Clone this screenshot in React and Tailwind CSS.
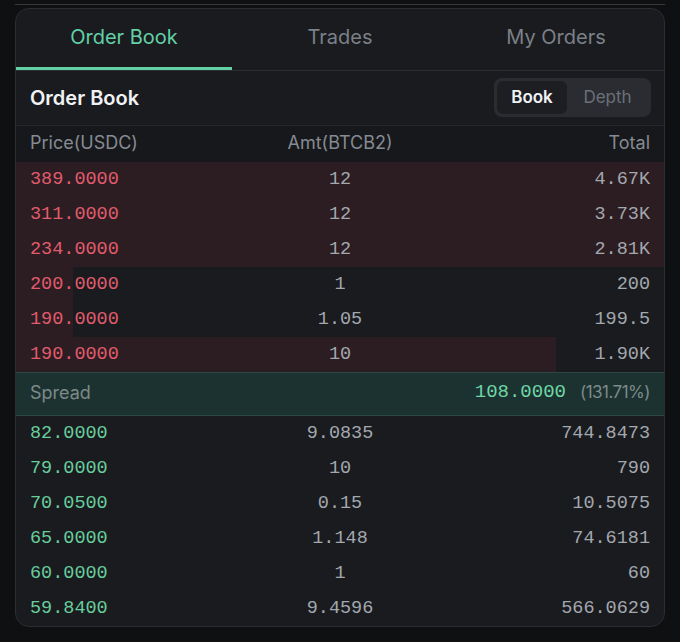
import React from 'react';

const asks = [
  { price: '389.0000', amt: '12', total: '4.67K', depth: 100 },
  { price: '311.0000', amt: '12', total: '3.73K', depth: 100 },
  { price: '234.0000', amt: '12', total: '2.81K', depth: 100 },
  { price: '200.0000', amt: '1', total: '200', depth: 8.8 },
  { price: '190.0000', amt: '1.05', total: '199.5', depth: 8.8 },
  { price: '190.0000', amt: '10', total: '1.90K', depth: 83.4 },
];

const bids = [
  { price: '82.0000', amt: '9.0835', total: '744.8473' },
  { price: '79.0000', amt: '10', total: '790' },
  { price: '70.0500', amt: '0.15', total: '10.5075' },
  { price: '65.0000', amt: '1.148', total: '74.6181' },
  { price: '60.0000', amt: '1', total: '60' },
  { price: '59.8400', amt: '9.4596', total: '566.0629' },
];

const sans = "font-['Inter','Noto_Sans',sans-serif]";
const mono = "font-['Liberation_Mono','DejaVu_Sans_Mono',monospace]";

function Row({ row, side }) {
  const priceColor = side === 'ask' ? 'text-[#e25b6d]' : 'text-[#68cd9c]';
  return (
    <div className={`relative grid h-[35px] grid-cols-3 items-center px-[14px] ${mono} text-[18.5px]`}>
      {row.depth ? (
        <div className="absolute inset-y-0 left-0 bg-[#2b1d22]" style={{ width: `${row.depth}%` }} />
      ) : null}
      <span className={`relative ${priceColor}`}>{row.price}</span>
      <span className="relative text-center text-[#a3a7ae]">{row.amt}</span>
      <span className="relative text-right text-[#a3a7ae]">{row.total}</span>
    </div>
  );
}

export default function App() {
  const tabs = ['Order Book', 'Trades', 'My Orders'];

  return (
    <div className={`min-h-[642px] bg-[#0f1012] ${sans}`}>
      <div className="mx-[15px] h-[5px] border-b border-[#34373c]" />

      <div className="mx-[15px] mt-[3px] overflow-hidden rounded-[14px] border border-[#2a2d32] bg-[#191b1f]">
        {/* tabs */}
        <div className="grid h-[62px] grid-cols-3 border-b border-[#2a2d32]">
          {tabs.map((t, i) => (
            <div
              key={t}
              className={`flex items-center justify-center border-b-[3px] pb-[3px] text-[20px] ${
                i === 0 ? 'border-[#63d0a6] text-[#63d0a6]' : 'border-transparent text-[#7c8088]'
              }`}
            >
              {t}
            </div>
          ))}
        </div>

        {/* title + view toggle */}
        <div className="flex h-[54px] items-center justify-between pb-[1px] pl-[14px] pr-[13px]">
          <h3 className="text-[20px] font-semibold text-[#f1f2f4]">Order Book</h3>
          <div className="flex h-[39px] items-center rounded-[8px] bg-[#2a2c31] p-[3px]">
            <div className="flex h-[33px] w-[70px] items-center justify-center rounded-[6px] bg-[#1c1e22] text-[17px] font-semibold text-[#f1f2f4]">
              Book
            </div>
            <div className="flex h-[33px] w-[81px] items-center justify-center text-[17px] text-[#6c7078]">
              Depth
            </div>
          </div>
        </div>

        {/* column labels */}
        <div className="grid h-[37px] grid-cols-3 items-center border-t border-[#23262a] bg-[#16181b] px-[14px] pb-[3px] text-[18px] text-[#868a92]">
          <span>Price(USDC)</span>
          <span className="text-center">Amt(BTCB2)</span>
          <span className="text-right">Total</span>
        </div>

        {asks.map((r, i) => (
          <Row key={i} row={r} side="ask" />
        ))}

        {/* spread */}
        <div className="flex h-[44px] items-center justify-between border-y border-[#2c4845] bg-[#1c3230] px-[14px] pb-[3px]">
          <span className="text-[18px] text-[#7c8a89]">Spread</span>
          <div className="flex items-center gap-[14px]">
            <span className={`${mono} text-[19px] text-[#6fd6a6]`}>108.0000</span>
            <span className="text-[17px] tracking-[-0.03em] text-[#7c8a89]">(131.71%)</span>
          </div>
        </div>

        {bids.map((r, i) => (
          <Row key={i} row={r} side="bid" />
        ))}
      </div>
    </div>
  );
}
